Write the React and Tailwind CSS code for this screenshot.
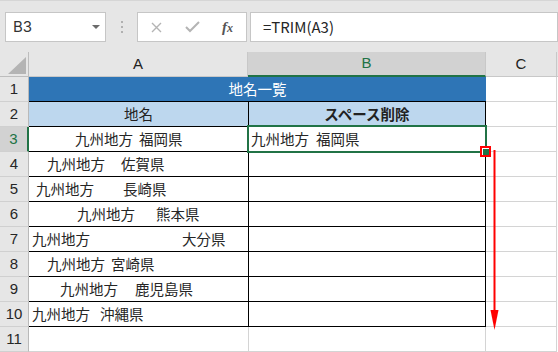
import React from "react";

const rows = [
  { n: 3, pl: 47, w: 64, a: "九州地方", b: "福岡県" },
  { n: 4, pl: 18, w: 74, a: "九州地方", b: "佐賀県" },
  { n: 5, pl: 7, w: 87, a: "九州地方", b: "長崎県" },
  { n: 6, pl: 48, w: 79, a: "九州地方", b: "熊本県" },
  { n: 7, pl: 3, w: 150, a: "九州地方", b: "大分県" },
  { n: 8, pl: 18, w: 64, a: "九州地方", b: "宮崎県" },
  { n: 9, pl: 31, w: 75, a: "九州地方", b: "鹿児島県" },
  { n: 10, pl: 3, w: 68, a: "九州地方", b: "沖縄県" },
];

const jp = "font-['Noto_Sans_CJK_JP','Noto_Sans',sans-serif]";

function RowHeader({ n, selected }) {
  return (
    <div
      className={
        "w-[29px] shrink-0 flex items-center justify-center text-[15px] border-b border-[#d0d0d0] " +
        (selected
          ? "bg-[#d2d2d2] text-[#217346] border-r-2 border-r-[#217346]"
          : "bg-[#e6e6e6] text-[#262626] border-r border-r-[#b9b9b9]")
      }
    >
      {n}
    </div>
  );
}

export default function App() {
  return (
    <div
      className={
        "relative w-[558px] h-[352px] overflow-hidden bg-[#e6e6e6] font-['Liberation_Sans','Noto_Sans_CJK_JP',sans-serif] text-[#222]"
      }
    >
      {/* toolbar */}
      <div className="h-[52px] flex items-start pt-[11px] pl-[5px] border-t border-[#d6d6d6]">
        <div className="w-[101px] h-[30px] bg-white border border-[#c6c6c6] flex items-center justify-between pl-[7px] pr-[5px]">
          <span className="text-[15px] text-[#333] font-['Inter','Liberation_Sans',sans-serif]">B3</span>
          <svg width="8" height="5" viewBox="0 0 8 5">
            <polygon points="0,0 8,0 4,4" fill="#6b6b6b" />
          </svg>
        </div>
        <div className="w-[31px] h-[30px] flex flex-col items-center justify-center gap-[3px]">
          <div className="w-[2px] h-[2px] bg-[#b0b0b0]" />
          <div className="w-[2px] h-[2px] bg-[#b0b0b0]" />
          <div className="w-[2px] h-[2px] bg-[#b0b0b0]" />
        </div>
        <div className="w-[110px] h-[30px] bg-white border border-[#c6c6c6] flex items-center">
          <svg className="ml-[13px]" width="11" height="11" viewBox="0 0 11 11">
            <path d="M1 1 L10 10 M10 1 L1 10" stroke="#b4b4b4" strokeWidth="1.4" />
          </svg>
          <svg className="ml-[23px]" width="15" height="12" viewBox="0 0 15 12">
            <path d="M1 6 L5 10 L14 1" stroke="#b4b4b4" strokeWidth="2" fill="none" />
          </svg>
          <span className="ml-[22px] text-[15px] leading-none italic font-bold text-[#555] font-['Liberation_Serif',serif]">
            f<span className="text-[12px]">x</span>
          </span>
        </div>
        <div className="ml-[3px] flex-1 h-[30px] bg-white border border-[#c6c6c6] flex items-center pl-[12px]">
          <span className={"text-[15px] text-[#262626] " + jp}>=TRIM(A3)</span>
        </div>
      </div>

      {/* column headers */}
      <div className="flex h-[25px]">
        <div className="relative w-[29px] shrink-0 bg-[#e6e6e6] border-r border-b border-[#bdbdbd]">
          <svg className="absolute left-[8px] top-[5px]" width="18" height="17" viewBox="0 0 18 17">
            <polygon points="0,17 18,17 18,0" fill="#b4b4b4" />
          </svg>
        </div>
        <div className="w-[219px] shrink-0 bg-[#e6e6e6] border-r border-b border-[#c8c8c8] flex items-center justify-center text-[15px]">
          A
        </div>
        <div className="w-[238px] shrink-0 bg-[#d2d2d2] border-r border-r-[#c8c8c8] border-b-2 border-b-[#217346] flex items-center justify-center text-[15px] text-[#217346]">
          B
        </div>
        <div className="w-[71px] shrink-0 bg-[#e6e6e6] border-r border-b border-[#c8c8c8] flex items-center justify-center text-[15px]">
          C
        </div>
        <div className="flex-1 bg-[#e6e6e6] border-b border-[#c8c8c8]" />
      </div>

      {/* row 1 */}
      <div className="flex h-[25px]">
        <RowHeader n={1} />
        <div className={"w-[457px] shrink-0 bg-[#2e75b6] border-b border-black flex items-center justify-center text-white text-[14.5px] " + jp}>
          地名一覧
        </div>
        <div className="w-[71px] shrink-0 bg-white border-r border-b border-[#d4d4d4]" />
        <div className="flex-1 bg-white" />
      </div>

      {/* row 2 */}
      <div className="flex h-[25px]">
        <RowHeader n={2} />
        <div className={"w-[220px] shrink-0 bg-[#bdd7ee] border-r border-b border-black flex items-center justify-center text-[14.5px] " + jp}>
          地名
        </div>
        <div className={"w-[237px] shrink-0 bg-[#bdd7ee] border-r border-b border-black flex items-center justify-center text-[14.5px] font-bold " + jp}>
          スペース削除
        </div>
        <div className="w-[71px] shrink-0 bg-white border-r border-b border-[#d4d4d4]" />
        <div className="flex-1 bg-white" />
      </div>

      {rows.map((r) => (
        <div key={r.n} className="flex h-[25px]">
          <RowHeader n={r.n} selected={r.n === 3} />
          <div
            className={"w-[220px] shrink-0 bg-white border-r border-b border-black flex items-center whitespace-nowrap text-[14.5px] text-[#262626] " + jp}
            style={{ paddingLeft: r.pl - (r.n === 3 ? 1 : 0) }}
          >
            <span className="inline-block" style={{ width: r.w }}>
              {r.a}
            </span>
            <span>{r.b}</span>
          </div>
          <div className={"w-[237px] shrink-0 bg-white border-r border-b border-black flex items-center whitespace-nowrap text-[14.5px] text-[#262626] pl-[2px] " + jp}>
            {r.n === 3 && (
              <>
                <span className="inline-block w-[65px]">九州地方</span>
                <span>福岡県</span>
              </>
            )}
          </div>
          <div className="w-[71px] shrink-0 bg-white border-r border-b border-[#d4d4d4]" />
          <div className="flex-1 bg-white" />
        </div>
      ))}

      {/* row 11 */}
      <div className="flex h-[25px]">
        <RowHeader n={11} />
        <div className="w-[220px] shrink-0 bg-white border-r border-b border-[#d4d4d4]" />
        <div className="w-[237px] shrink-0 bg-white border-r border-b border-[#d4d4d4]" />
        <div className="w-[71px] shrink-0 bg-white border-r border-b border-[#d4d4d4]" />
        <div className="flex-1 bg-white" />
      </div>

      {/* selection of B3 */}
      <div className="absolute left-[247px] top-[125px] w-[240px] h-[28px] border-2 border-[#217346]" />
      {/* fill handle with red annotation */}
      <div className="absolute left-[480px] top-[146px] w-[11px] h-[11px] border-2 border-[#ff0000] bg-white flex items-center justify-center">
        <div className="w-[6px] h-[6px] bg-[#217346]" />
      </div>
      {/* red arrow */}
      <svg className="absolute left-[488px] top-[150px]" width="14" height="182" viewBox="0 0 14 182">
        <line x1="6.5" y1="0" x2="6.5" y2="165" stroke="#ff0000" strokeWidth="2" />
        <polygon points="2.5,160 10.5,160 6.5,180" fill="#ff0000" />
      </svg>
    </div>
  );
}
